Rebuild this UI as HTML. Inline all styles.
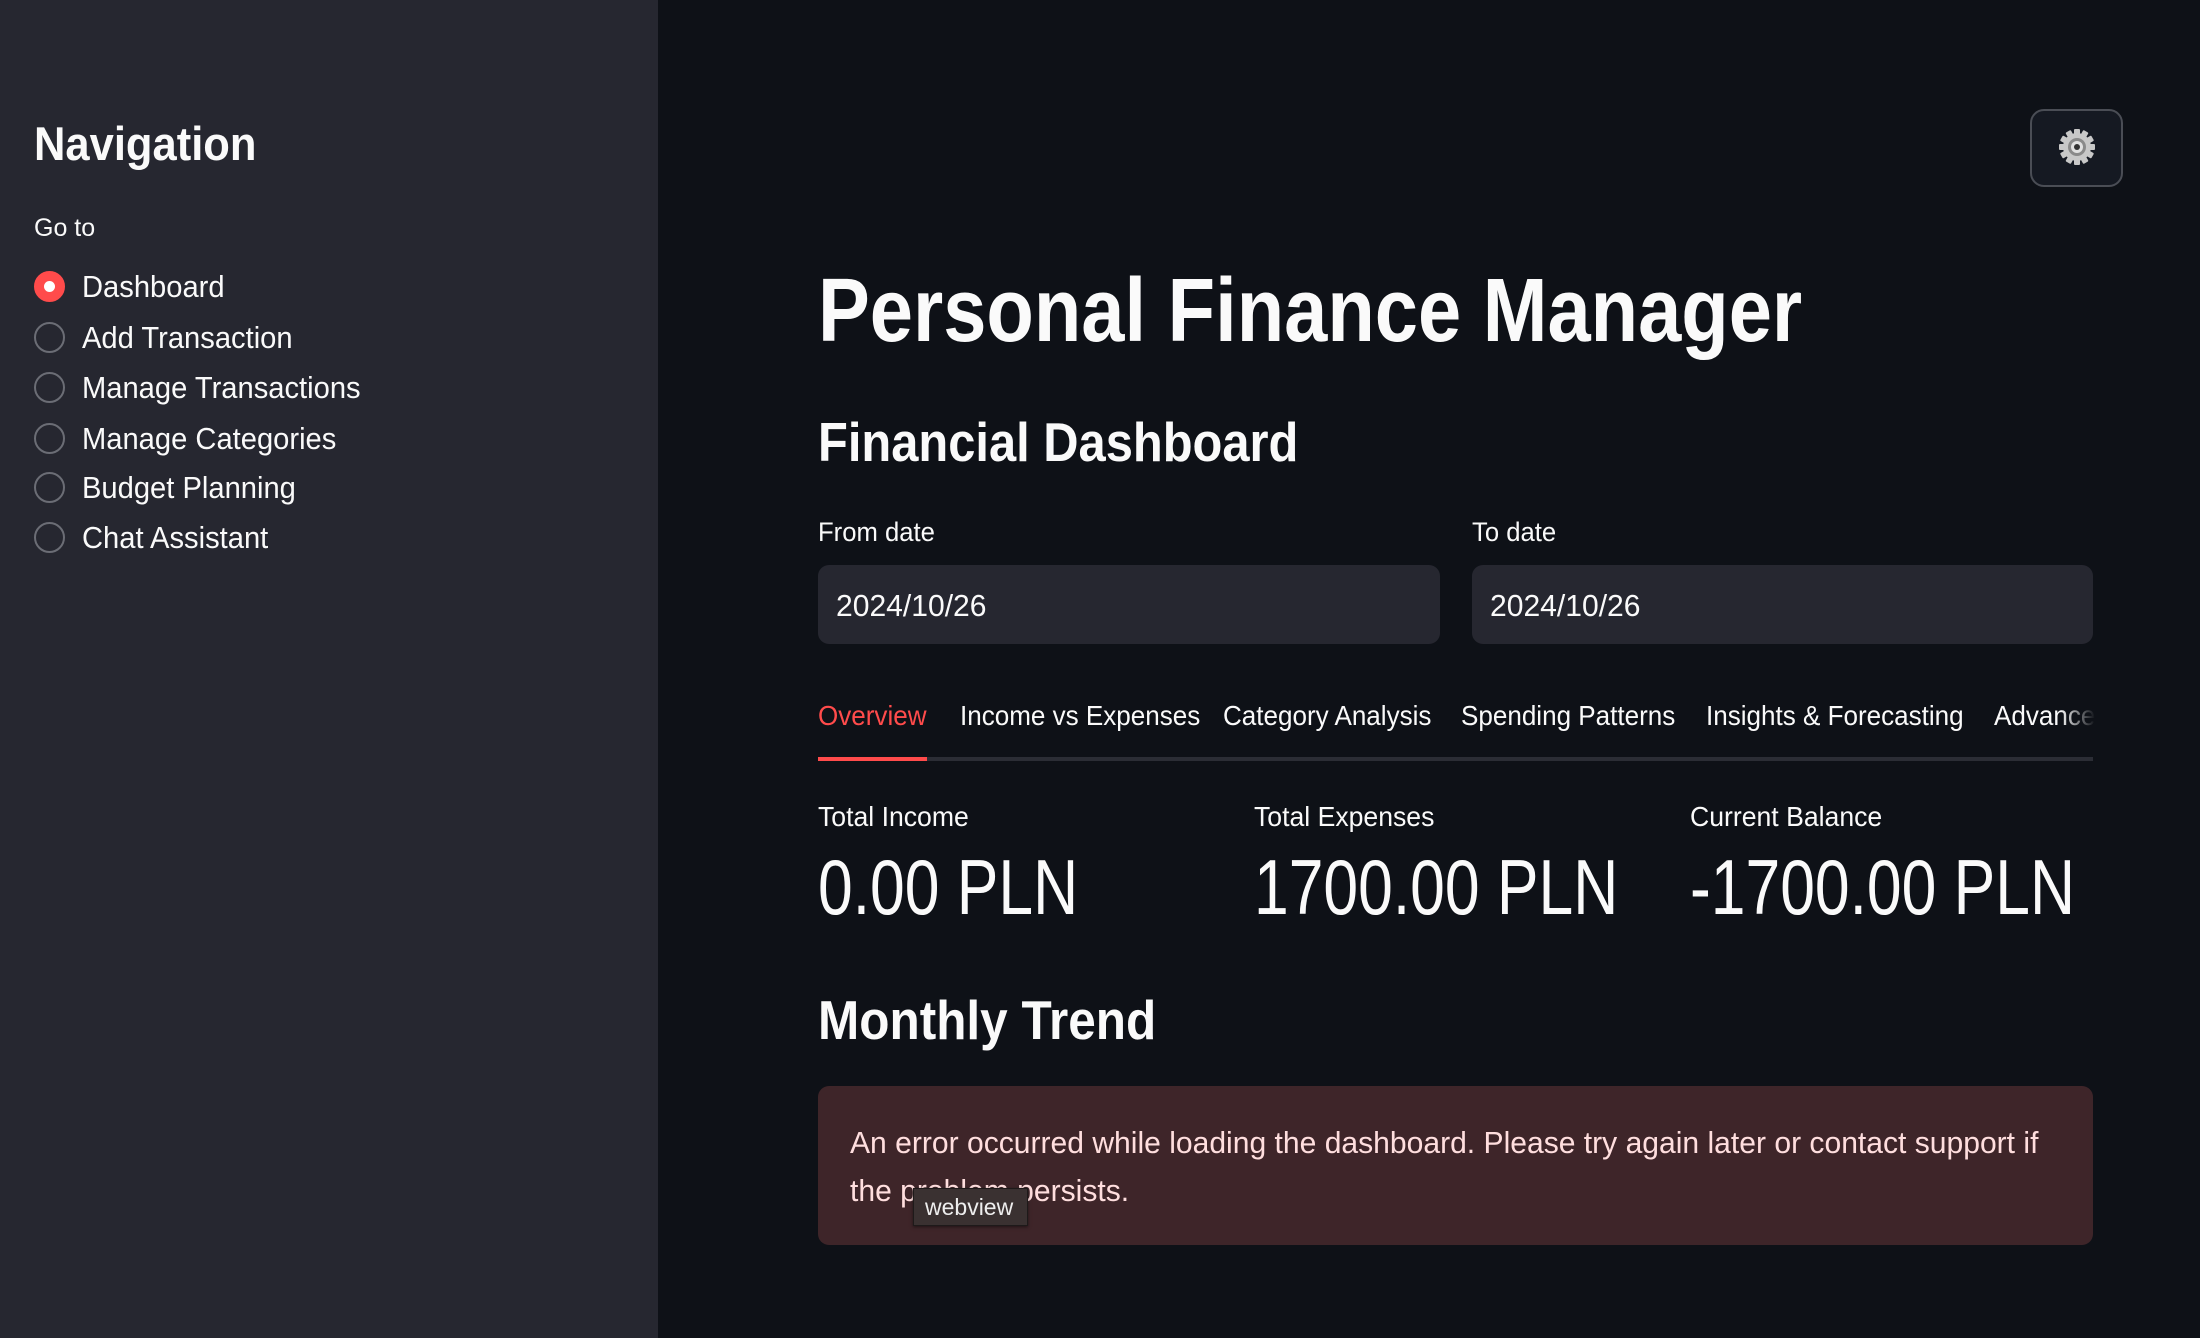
<!DOCTYPE html>
<html><head><meta charset="utf-8"><style>
*{margin:0;padding:0;box-sizing:border-box}
body{width:2200px;height:1338px;background:#0e1117;font-family:"Liberation Sans",sans-serif;color:#fafafa;position:relative;overflow:hidden}
.sb{position:absolute;left:0;top:0;width:658px;height:1338px;background:#262730}
.t{position:absolute;white-space:nowrap;line-height:1;transform:scaleX(.94);transform-origin:left center}
.r{position:absolute;left:34px;width:31px;height:31px;border-radius:50%;border:2px solid #6b6d75}
.inp{position:absolute;top:565px;height:79px;background:#262730;border-radius:11px}
.box{position:absolute;left:818px;top:1086px;width:1275px;height:159px;background:#3e2529;border-radius:11px}
</style></head><body>
<div class="sb"></div>
<div class="t" style="left:34px;top:120px;font-size:47px;font-weight:bold;transform:scaleX(.926)">Navigation</div>
<div class="t" style="left:34px;top:216px;font-size:25px;transform:scaleX(1)">Go to</div>
<div class="r" style="top:271px;background:#ff4b4b;border-color:#ff4b4b"><div style="position:absolute;left:8px;top:8px;width:11px;height:11px;border-radius:50%;background:#fff"></div></div>
<div class="r" style="top:322px"></div>
<div class="r" style="top:372px"></div>
<div class="r" style="top:423px"></div>
<div class="r" style="top:472px"></div>
<div class="r" style="top:522px"></div>
<div class="t" style="left:82px;top:271px;font-size:31px">Dashboard</div>
<div class="t" style="left:82px;top:322px;font-size:31px">Add Transaction</div>
<div class="t" style="left:82px;top:372px;font-size:31px">Manage Transactions</div>
<div class="t" style="left:82px;top:423px;font-size:31px">Manage Categories</div>
<div class="t" style="left:82px;top:472px;font-size:31px">Budget Planning</div>
<div class="t" style="left:82px;top:522px;font-size:31px">Chat Assistant</div>

<div style="position:absolute;left:2030px;top:109px;width:93px;height:78px;border:2px solid #4a4d55;border-radius:14px;background:#151922"></div>
<svg style="position:absolute;left:2057px;top:127px" width="40" height="40" viewBox="0 0 40 40">
<g fill="#c8c8c8"><circle cx="20" cy="20" r="14"/>
<g id="tt"><rect x="17" y="2" width="6" height="8" rx="1"/></g>
<use href="#tt" transform="rotate(30 20 20)"/><use href="#tt" transform="rotate(60 20 20)"/><use href="#tt" transform="rotate(90 20 20)"/><use href="#tt" transform="rotate(120 20 20)"/><use href="#tt" transform="rotate(150 20 20)"/><use href="#tt" transform="rotate(180 20 20)"/><use href="#tt" transform="rotate(210 20 20)"/><use href="#tt" transform="rotate(240 20 20)"/><use href="#tt" transform="rotate(270 20 20)"/><use href="#tt" transform="rotate(300 20 20)"/><use href="#tt" transform="rotate(330 20 20)"/></g>
<circle cx="20" cy="20" r="9" fill="#8a8a8a"/><circle cx="20" cy="20" r="6" fill="#e0e0e0"/><circle cx="20" cy="20" r="3" fill="#333"/>
</svg>

<div class="t" style="left:818px;top:266px;font-size:90px;font-weight:bold;transform:scaleX(.863)">Personal Finance Manager</div>
<div class="t" style="left:818px;top:415px;font-size:55px;font-weight:bold;transform:scaleX(.888)">Financial Dashboard</div>
<div class="t" style="left:818px;top:519px;font-size:27px;transform:scaleX(.95)">From date</div>
<div class="t" style="left:1472px;top:519px;font-size:27px;transform:scaleX(.95)">To date</div>
<div class="inp" style="left:818px;width:622px"></div>
<div class="inp" style="left:1472px;width:621px"></div>
<div class="t" style="left:836px;top:590px;font-size:31px;transform:scaleX(.97)">2024/10/26</div>
<div class="t" style="left:1490px;top:590px;font-size:31px;transform:scaleX(.97)">2024/10/26</div>

<div class="t" style="left:818px;top:702px;font-size:28px;color:#ff4b4b;transform:scaleX(.93)">Overview</div>
<div class="t" style="left:960px;top:702px;font-size:28px;transform:scaleX(.93)">Income vs Expenses</div>
<div class="t" style="left:1223px;top:702px;font-size:28px;transform:scaleX(.93)">Category Analysis</div>
<div class="t" style="left:1461px;top:702px;font-size:28px;transform:scaleX(.93)">Spending Patterns</div>
<div class="t" style="left:1706px;top:702px;font-size:28px;transform:scaleX(.93)">Insights &amp; Forecasting</div>
<div class="t" style="left:1994px;top:702px;font-size:28px;transform:scaleX(.93)">Advanced</div>
<div style="position:absolute;left:2060px;top:695px;width:140px;height:50px;background:linear-gradient(90deg,rgba(14,17,23,0),#0e1117 25%)"></div>
<div style="position:absolute;left:818px;top:757px;width:1275px;height:4px;background:#2b2d35"></div>
<div style="position:absolute;left:818px;top:757px;width:109px;height:4px;background:#ff4b4b"></div>

<div class="t" style="left:818px;top:803px;font-size:28px;transform:scaleX(.95)">Total Income</div>
<div class="t" style="left:1254px;top:803px;font-size:28px;transform:scaleX(.95)">Total Expenses</div>
<div class="t" style="left:1690px;top:803px;font-size:28px;transform:scaleX(.95)">Current Balance</div>
<div class="t" style="left:818px;top:848px;font-size:78px;transform:scaleX(.80)">0.00 PLN</div>
<div class="t" style="left:1254px;top:848px;font-size:78px;transform:scaleX(.80)">1700.00 PLN</div>
<div class="t" style="left:1690px;top:848px;font-size:78px;transform:scaleX(.80)">-1700.00 PLN</div>

<div class="t" style="left:818px;top:993px;font-size:55px;font-weight:bold;transform:scaleX(.90)">Monthly Trend</div>
<div class="box"></div>
<div class="t" style="left:850px;top:1127px;font-size:31px;color:#ffdede;transform:scaleX(.97)">An error occurred while loading the dashboard. Please try again later or contact support if</div>
<div class="t" style="left:850px;top:1175px;font-size:31px;color:#ffdede;transform:scaleX(.97)">the problem persists.</div>
<div style="position:absolute;left:913px;top:1188px;width:115px;height:38px;background:#3a3131;border:1px solid #1e1a1a;box-shadow:0 1px 3px rgba(0,0,0,.5)"></div>
<div class="t" style="left:925px;top:1196px;font-size:23px;color:#eee;transform:scaleX(1)">webview</div>
</body></html>
